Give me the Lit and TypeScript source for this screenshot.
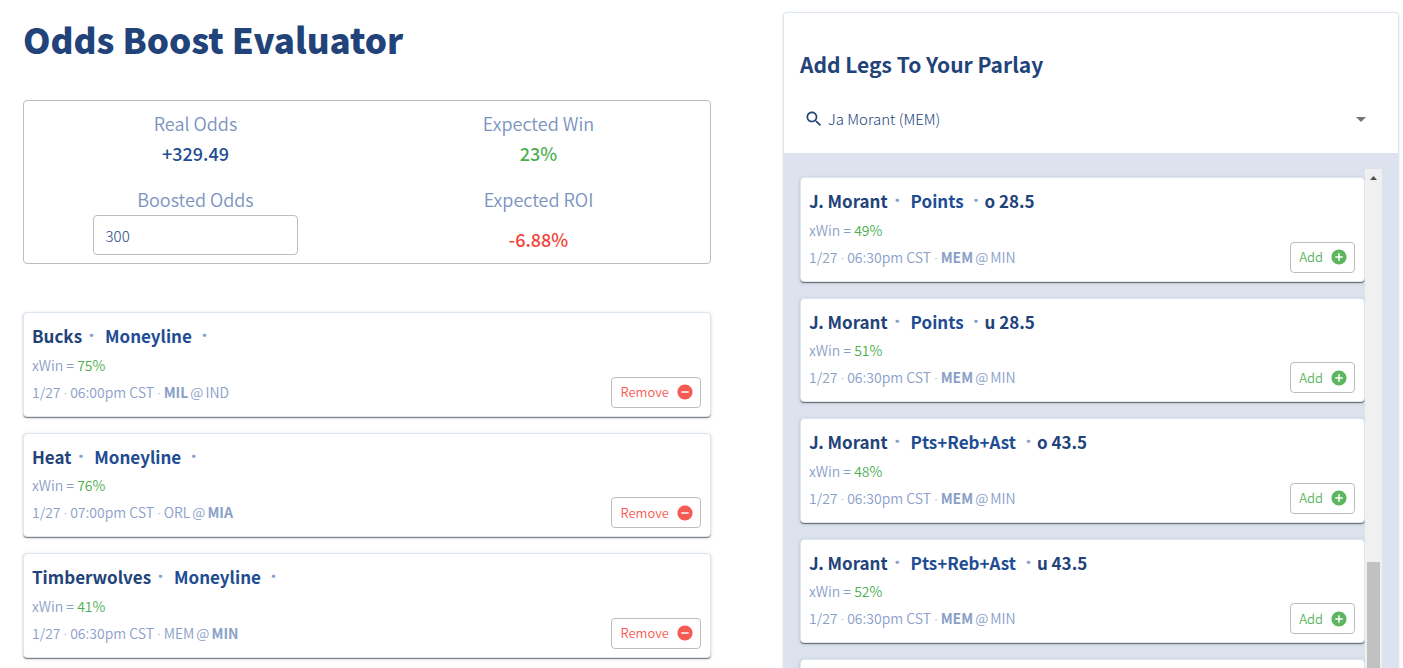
import { LitElement, html, css, svg } from "lit";
import { customElement, property } from "lit/decorators.js";

interface Leg {
  name: string;
  market: string;
  line: string;
  xwin: string;
  time: string;
  away: string;
  home: string;
  pick: "away" | "home";
}

const MY_LEGS: Leg[] = [
  { name: "Bucks", market: "Moneyline", line: "", xwin: "75%", time: "06:00pm", away: "MIL", home: "IND", pick: "away" },
  { name: "Heat", market: "Moneyline", line: "", xwin: "76%", time: "07:00pm", away: "ORL", home: "MIA", pick: "home" },
  { name: "Timberwolves", market: "Moneyline", line: "", xwin: "41%", time: "06:30pm", away: "MEM", home: "MIN", pick: "home" },
];

const morant = (market: string, line: string, xwin: string): Leg => ({
  name: "J. Morant", market, line, xwin, time: "06:30pm", away: "MEM", home: "MIN", pick: "away",
});

const OPTIONS: Leg[] = [
  morant("Points", "o 28.5", "49%"),
  morant("Points", "u 28.5", "51%"),
  morant("Pts+Reb+Ast", "o 43.5", "48%"),
  morant("Pts+Reb+Ast", "u 43.5", "52%"),
];

const minusIcon = svg`<path d="M12 2C6.48 2 2 6.48 2 12s4.48 10 10 10 10-4.48 10-10S17.52 2 12 2zm5 11H7v-2h10v2z"/>`;
const plusIcon = svg`<path d="M12 2C6.48 2 2 6.48 2 12s4.48 10 10 10 10-4.48 10-10S17.52 2 12 2zm5 11h-4v4h-2v-4H7v-2h4V7h2v4h4v2z"/>`;

const cardFrame = css`
  .card {
    box-sizing: border-box;
    background: #fff;
    border: 1px solid #dbe6f0;
    border-radius: 4px;
    box-shadow: 0 2px 1px -1px rgba(0, 0, 0, 0.3), 0 1px 1px rgba(0, 0, 0, 0.26), 0 1px 4px rgba(0, 0, 0, 0.12);
    padding: 8px 9px 8px 8px;
  }
`;

@customElement("leg-card")
export class LegCard extends LitElement {
  @property({ attribute: false }) leg!: Leg;
  @property() mode: "add" | "remove" = "add";

  static styles = [
    cardFrame,
    css`
      :host { display: block; flex: none; }
      .card { display: flex; align-items: flex-end; justify-content: space-between; }
      .info { padding-bottom: 2px; }
      .title {
        display: flex;
        margin: 2px 0;
        font-size: 17px;
        line-height: 1.5;
        font-weight: 700;
        color: #22437a;
        white-space: nowrap;
      }
      .title .dot { font-weight: 800; line-height: 1; align-self: center; }
      .market { color: #214c93; margin: 0 10px 0 11px; }
      .dot { font-family: "Open Sans", sans-serif; color: #8ba3c9; }
      .name { margin-right: 7px; }
      .line { margin-left: 6px; }
      .meta {
        margin: 0;
        height: 28px;
        font-size: 14px;
        line-height: 28px;
        font-weight: 350;
        color: #8aa0c9;
        white-space: nowrap;
      }
      .game { height: 27px; line-height: 27px; }
      .meta b { font-weight: 700; }
      .at { margin: 0 2px; }
      .good { color: #4caf50; }
      .btn {
        display: flex;
        align-items: center;
        gap: 7px;
        box-sizing: border-box;
        height: 31px;
        padding: 0 6px 0 8px;
        border: 1px solid #bdbdbd;
        border-radius: 4px;
        background: #fff;
        font: 350 13px/20px "Noto Sans CJK SC", sans-serif;
        cursor: pointer;
      }
      .btn svg { width: 18px; height: 18px; fill: currentColor; }
      .remove { color: #f65a54; }
      .add { color: #5cb660; }
    `,
  ];

  render() {
    const { name, market, line, xwin, time, away, home, pick } = this.leg;
    const add = this.mode === "add";
    const dot = html`<span class="dot">·</span>`;
    return html`
      <article class="card">
        <div class="info">
          <h3 class="title"><span class="name">${name}</span>${dot}<span class="market">${market}</span>${dot}<span class="line">${line}</span></h3>
          <p class="meta">xWin = <span class="good">${xwin}</span></p>
          <p class="meta game">1/27 ${dot} ${time} CST ${dot} ${pick === "away" ? html`<b>${away}</b>` : away}<span class="at">@</span>${pick === "home" ? html`<b>${home}</b>` : home}</p>
        </div>
        <button class="btn ${this.mode}" type="button">
          ${add ? "Add" : "Remove"}
          <svg viewBox="0 0 24 24" aria-hidden="true">${add ? plusIcon : minusIcon}</svg>
        </button>
      </article>
    `;
  }
}

@customElement("app-root")
export class AppRoot extends LitElement {
  static styles = [
    cardFrame,
    css`
      :host {
        display: block;
        height: 100vh;
        overflow: hidden;
        background: #fff;
        font-family: "Noto Sans CJK SC", sans-serif;
        color: #22437a;
      }
      .page {
        box-sizing: border-box;
        height: 100%;
        display: grid;
        grid-template-columns: minmax(0, 688fr) minmax(0, 616fr);
        gap: 72px;
        padding: 12px 4px 0 23px;
      }
      h1 { margin: 0 0 34px; font-size: 35px; line-height: 54px; font-weight: 900; }
      .summary {
        display: grid;
        grid-template-columns: 1fr 1fr;
        row-gap: 16px;
        border: 1px solid #bdbdbd;
        border-radius: 4px;
        padding: 8px 0;
        margin-bottom: 48px;
        text-align: center;
      }
      .stat { display: flex; flex-direction: column; align-items: center; font-size: 18px; line-height: 30px; }
      .label { color: #7b93c1; font-weight: 350; line-height: 28px; margin-bottom: 2px; }
      .value { color: #214c93; font-weight: 500; line-height: 28px; padding-bottom: 2px; flex: 1; display: flex; align-items: flex-end; }
      .good { color: #4caf50; }
      .bad { color: #f44336; }
      .odds {
        box-sizing: border-box;
        width: 60%;
        height: 40px;
        padding: 0 12px;
        border: 1px solid #bdbdbd;
        border-radius: 4px;
        font: 300 15px/20px "Noto Sans CJK SC", sans-serif;
        color: #22437a;
      }
      .list { display: flex; flex-direction: column; gap: 16px; }
      .panel {
        display: flex;
        flex-direction: column;
        min-height: 0;
        border: 1px solid #dbe6f0;
        border-bottom: 0;
        border-radius: 4px 4px 0 0;
        box-shadow: 0 1px 3px rgba(0, 0, 0, 0.12);
        overflow: hidden;
      }
      .head { padding: 36px 16px 16px; }
      h2 { margin: 0 0 22px; font-size: 21px; line-height: 30px; font-weight: 700; }
      .picker { display: grid; grid-template-columns: 20px 1fr 24px; align-items: center; column-gap: 4px; height: 36px; padding: 0 9px 0 4px; }
      .picker select {
        appearance: none;
        border: 0;
        background: none;
        padding: 0;
        width: 100%;
        font: 300 15px/24px "Noto Sans CJK SC", sans-serif;
        color: #22437a;
      }
      .search { width: 20px; height: 20px; fill: #22437a; }
      .caret { width: 24px; height: 24px; fill: #757575; }
      .results { flex: 1; min-height: 0; display: flex; align-items: stretch; background: #dce2ee; padding: 16px 16px 0; overflow: hidden; }
      .results .list { flex: 1; padding-top: 8px; }
      .bar { width: 17px; background: #f0f0f0; display: flex; flex-direction: column; align-items: center; }
      .up { width: 17px; height: 17px; fill: #505050; }
      .thumb { width: 13px; flex: 1; margin-top: 376px; background: #c1c1c1; }
    `,
  ];

  render() {
    return html`
      <main class="page">
        <section>
          <h1>Odds Boost Evaluator</h1>
          <div class="summary">
            <div class="stat"><span class="label">Real Odds</span><span class="value">+329.49</span></div>
            <div class="stat"><span class="label">Expected Win</span><span class="value good">23%</span></div>
            <div class="stat">
              <label class="label" for="boosted">Boosted Odds</label>
              <input class="odds" id="boosted" type="text" .value=${"300"} />
            </div>
            <div class="stat"><span class="label">Expected ROI</span><span class="value bad">-6.88%</span></div>
          </div>
          <div class="list">
            ${MY_LEGS.map((leg) => html`<leg-card mode="remove" .leg=${leg}></leg-card>`)}
          </div>
        </section>
        <section class="panel">
          <div class="head">
            <h2>Add Legs To Your Parlay</h2>
            <div class="picker">
              <svg class="search" viewBox="0 0 24 24" aria-hidden="true">
                <path d="M15.5 14h-.79l-.28-.27C15.41 12.59 16 11.11 16 9.5 16 5.91 13.09 3 9.5 3S3 5.91 3 9.5 5.91 16 9.5 16c1.61 0 3.09-.59 4.23-1.57l.27.28v.79l5 4.99L20.49 19l-4.99-5zm-6 0C7.01 14 5 11.99 5 9.5S7.01 5 9.5 5 14 7.01 14 9.5 11.99 14 9.5 14z" />
              </svg>
              <select aria-label="Player"><option>Ja Morant (MEM)</option></select>
              <svg class="caret" viewBox="0 0 24 24" aria-hidden="true"><path d="M7 10l5 5 5-5z" /></svg>
            </div>
          </div>
          <div class="results">
            <div class="list">
              ${OPTIONS.map((leg) => html`<leg-card mode="add" .leg=${leg}></leg-card>`)}
              <div class="card"></div>
            </div>
            <div class="bar" aria-hidden="true">
              <svg class="up" viewBox="0 0 17 17"><path d="M5 11h7L8.500 7z" /></svg>
              <div class="thumb"></div>
            </div>
          </div>
        </section>
      </main>
    `;
  }
}
